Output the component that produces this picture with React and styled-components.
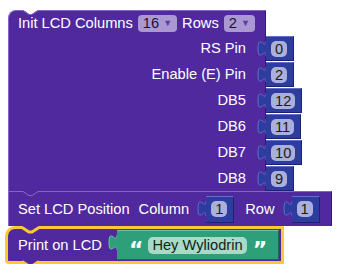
import React from 'react';
import styled, { createGlobalStyle } from 'styled-components';

const C = {
  purple: '#51299f',
  purpleLight: '#8466c4',
  purpleDark: '#331a6b',
  blue: '#2e3c9f',
  blueLight: '#6070c6',
  blueDark: '#1b236e',
  numField: '#aab0dd',
  green: '#2ea079',
  greenLight: '#6cc6a5',
  greenDark: '#1b6a4f',
  textField: '#a8dbc7',
  yellow: '#fcc934',
  dropdown: '#ab98d2',
};

const GlobalStyle = createGlobalStyle`
  *, *::before, *::after { box-sizing: border-box; }
  html, body { margin: 0; padding: 0; background: #fff; }
  body {
    font-family: "Liberation Sans", Arial, sans-serif;
    font-size: 11pt;
    color: #fff;
  }
`;

const Canvas = styled.div`
  padding: 10px 0 0 8px;
  display: flex;
  flex-direction: column;
  align-items: flex-start;
`;

const InitBlock = styled.div`
  position: relative;
  display: flex;
  flex-direction: column;
`;

const HeaderCell = styled.div`
  width: 258px;
  height: 25px;
  display: flex;
  align-items: center;
  gap: 5px;
  padding: 0 0 0 9px;
  background: ${C.purple};
  border-top: 1px solid ${C.purpleLight};
  border-left: 1px solid ${C.purpleLight};
  border-right: 1px solid ${C.purpleDark};
  border-top-left-radius: 8px;
`;

const Label = styled.span`
  color: #fff;
  white-space: nowrap;
  line-height: 17px;
  margin-left: ${(p) => p.$ml || 0}px;
`;

const Dropdown = styled.span`
  display: inline-flex;
  align-items: center;
  height: 17px;
  padding: 0 5px;
  border-radius: 4px;
  background: ${C.dropdown};
  color: #1a1030;
  line-height: 17px;
`;

const Arrow = styled.span`
  font-size: 9px;
  color: #5a3ea6;
  margin-left: 4px;
`;

const PinRow = styled.div`
  display: flex;
  height: 26px;
`;

const PinCell = styled.div`
  width: 258px;
  flex: none;
  display: flex;
  align-items: center;
  justify-content: flex-end;
  padding-right: 19px;
  background: ${C.purple};
  border-left: 1px solid ${C.purpleLight};
  border-right: 1px solid ${C.purpleDark};
`;

const ValueWrap = styled.div`
  display: flex;
  flex: none;
  height: ${(p) => p.$h}px;
  margin-left: ${(p) => (p.$inline ? 0 : -8)}px;
  margin-top: ${(p) => p.$mt || 0}px;
`;

const TabSvg = styled.svg`
  display: block;
  flex: none;
  overflow: visible;
`;

const ValueBody = styled.div`
  display: flex;
  align-items: center;
  gap: ${(p) => p.$gap || 0}px;
  height: 100%;
  padding: 0 ${(p) => p.$pr}px 0 ${(p) => p.$pl}px;
  background: ${(p) => p.$bg};
  border-top: 1px solid ${(p) => p.$light};
  border-right: 1px solid ${(p) => p.$dark};
  border-bottom: 1px solid ${(p) => p.$dark};
`;

const Field = styled.span`
  display: inline-flex;
  align-items: center;
  height: ${(p) => p.$h}px;
  padding: 0 4px;
  border-radius: 5px;
  background: ${(p) => p.$bg};
  color: ${(p) => p.$color};
  white-space: nowrap;
`;

const Quote = styled.span`
  font-family: "DejaVu Sans", "Liberation Sans", sans-serif;
  font-weight: bold;
  font-size: 22px;
  line-height: 1;
  height: 14px;
  overflow: visible;
  color: #fff;
  margin-top: 2px;
  letter-spacing: -1px;
`;

const SetBlock = styled.div`
  position: relative;
  width: 324px;
  height: 35px;
  display: flex;
  align-items: center;
  gap: 9px;
  padding-left: 9px;
  background: ${C.purple};
  border-top: 1px solid ${C.purpleLight};
  border-left: 1px solid ${C.purpleLight};
  border-right: 1px solid ${C.purpleDark};
`;

const PrintBlock = styled.div`
  position: relative;
  margin-left: -3px;
  width: 279px;
  height: 38px;
  display: flex;
  align-items: center;
  gap: 7px;
  padding-left: 10px;
  background: ${C.purple};
  border: 3px solid ${C.yellow};
  border-top-left-radius: 10px;
  border-bottom-left-radius: 4px;
`;

const Overlay = styled.svg`
  position: absolute;
  left: ${(p) => p.$left}px;
  top: ${(p) => p.$top};
  overflow: visible;
  display: block;
`;

function Tab({ h, fill, stroke }) {
  return (
    <TabSvg width="8" height={h} viewBox={`0 0 8 ${h}`}>
      <path
        d="M8,5 c0,10 -8,-8 -8,7.5 s8,-2.5 8,7.5"
        fill={fill}
        stroke={stroke}
        strokeWidth="1"
      />
    </TabSvg>
  );
}

function NumBlock({ value, h = 25, inline, mt }) {
  return (
    <ValueWrap $h={h} $inline={inline} $mt={mt}>
      <Tab h={h} fill={C.blue} stroke={C.blueLight} />
      <ValueBody $bg={C.blue} $light={C.blueLight} $dark={C.blueDark} $pl={5} $pr={6}>
        <Field $h={16} $bg={C.numField} $color="#24190a">
          {value}
        </Field>
      </ValueBody>
    </ValueWrap>
  );
}

function TextBlock({ text }) {
  return (
    <ValueWrap $h={30} $inline>
      <Tab h={30} fill={C.green} stroke={C.greenLight} />
      <ValueBody
        $bg={C.green}
        $light={C.greenLight}
        $dark={C.greenDark}
        $pl={12}
        $pr={12}
        $gap={6}
      >
        <Quote>“</Quote>
        <Field $h={17} $bg={C.textField} $color="#0f1f18">
          {text}
        </Field>
        <Quote>”</Quote>
      </ValueBody>
    </ValueWrap>
  );
}

const pins = [
  ['RS Pin', '0'],
  ['Enable (E) Pin', '2'],
  ['DB5', '12'],
  ['DB6', '11'],
  ['DB7', '10'],
  ['DB8', '9'],
];

export default function App() {
  return (
    <>
      <GlobalStyle />
      <Canvas>
        <InitBlock>
          <Overlay $left={15} $top="0px" width="15" height="5">
            <path d="M-0.5,-0.5 L15.5,-0.5 L9,4 L6,4 Z" fill="#fff" />
            <path d="M0,0.5 L6,4.5 L9,4.5 L15,0.5" fill="none" stroke={C.purpleLight} />
          </Overlay>
          <HeaderCell>
            <Label>Init LCD Columns</Label>
            <Dropdown>
              16<Arrow>▼</Arrow>
            </Dropdown>
            <Label>Rows</Label>
            <Dropdown>
              2<Arrow>▼</Arrow>
            </Dropdown>
          </HeaderCell>
          {pins.map(([label, value]) => (
            <PinRow key={label}>
              <PinCell>
                <Label>{label}</Label>
              </PinCell>
              <NumBlock value={value} mt={1} />
            </PinRow>
          ))}
        </InitBlock>

        <SetBlock>
          <Overlay $left={14} $top="-1px" width="15" height="6">
            <rect x="0" y="0" width="15" height="1" fill={C.purple} />
            <path d="M0,0.5 L6,4.5 L9,4.5 L15,0.5" fill="none" stroke={C.purpleLight} />
          </Overlay>
          <Label>Set LCD Position</Label>
          <Label>Column</Label>
          <NumBlock value="1" h={27} inline />
          <Label $ml={2}>Row</Label>
          <NumBlock value="1" h={27} inline />
        </SetBlock>

        <PrintBlock>
          <Overlay $left={15} $top="-3px" width="15" height="8">
            <path d="M-1,0 L16,0 L9,5.5 L6,5.5 Z" fill={C.purple} />
            <path d="M-1,1.5 L6,6 L9,6 L16,1.5" fill="none" stroke={C.yellow} strokeWidth="3" />
          </Overlay>
          <Label>Print on LCD</Label>
          <TextBlock text="Hey Wyliodrin" />
          <Overlay $left={15} $top="100%" width="15" height="6">
            <path d="M-1,0 L16,0 L9,4 L6,4 Z" fill={C.purple} />
            <path d="M-1,0.5 L6,5 L9,5 L16,0.5" fill="none" stroke={C.yellow} strokeWidth="3" />
          </Overlay>
        </PrintBlock>
      </Canvas>
    </>
  );
}
